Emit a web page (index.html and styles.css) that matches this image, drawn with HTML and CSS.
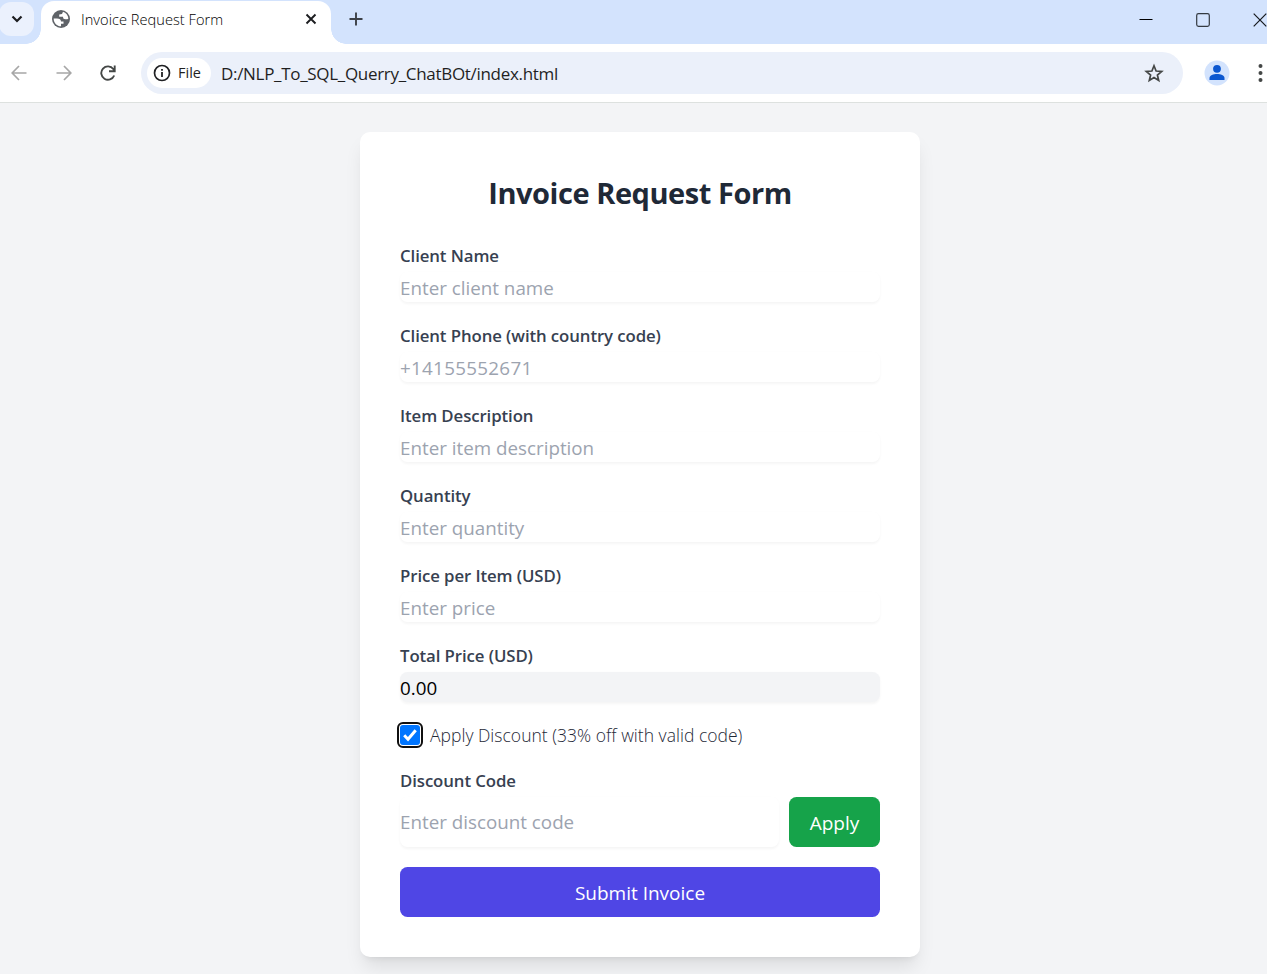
FILE: index.html
```html
<!DOCTYPE html>
<html lang="en">
<head>
<meta charset="utf-8">
<title>Invoice Request Form</title>
<link rel="stylesheet" href="styles.css">
</head>
<body>
<div class="tabstrip">
  <div class="tab-search"><svg width="12" height="8" viewBox="0 0 12 8"><path d="M1.500 1.500 6 6l4.500-4.500" fill="none" stroke="#1c1d20" stroke-width="2.200"/></svg></div>
  <div class="tab">
    <svg width="20" height="20" viewBox="0 0 20 20"><circle cx="10" cy="10" r="9" fill="#5f6368"/><path d="M2.700 9.500H6c2.600 0 4 .9 4 3h2.500v2.300H10V17.300C6 17.300 2.700 14 2.700 10zM12 2.800c3 .9 5.100 3.600 5.400 6.700-.9.900-1.800.800-3 .8-1.700 0-2.400-.8-2.400-2.500H8.200V5.500L11 5z" fill="#fff"/></svg>
    <span class="tab-title">Invoice Request Form</span>
    <svg class="tab-close" width="12" height="12" viewBox="0 0 12 12"><path d="M1.500 1.500l9 9M10.500 1.500l-9 9" stroke="#1c1d20" stroke-width="1.900"/></svg>
  </div>
  <div class="strip-rest">
    <svg width="14" height="14" viewBox="0 0 14 14"><path d="M7 .5v13M.5 7h13" stroke="#3c4047" stroke-width="1.900"/></svg>
    <div class="window-controls">
      <svg width="14" height="14" viewBox="0 0 14 14"><path d="M.5 6.500h13" stroke="#000"/></svg>
      <svg width="14" height="14" viewBox="0 0 14 14"><rect x=".7" y=".7" width="12.600" height="12.600" rx="1.800" fill="none" stroke="#333941" stroke-width="1.200"/></svg>
      <svg width="14" height="14" viewBox="0 0 14 14"><path d="M.7.700l12.600 12.600M13.300.700.700 13.300" stroke="#15181c" stroke-width="1.200"/></svg>
    </div>
  </div>
</div>
<div class="toolbar">
  <div class="nav">
    <svg width="16" height="16" viewBox="0 0 16 16"><path d="M15.500 8H1.500M8 1 1.200 8 8 15" fill="none" stroke="#a7a7a7" stroke-width="1.700"/></svg>
    <svg width="16" height="16" viewBox="0 0 16 16"><path d="M.5 8h14M8 1l6.800 7L8 15" fill="none" stroke="#a7a7a7" stroke-width="1.700"/></svg>
    <svg width="16" height="16" viewBox="0 0 16 16"><path d="M14.200 10.500A6.700 6.700 0 1 1 13.300 4L14.500 6M14.700.500V6.300H9" fill="none" stroke="#444746" stroke-width="1.900"/></svg>
  </div>
  <div class="address">
    <div class="chip"><svg width="18" height="18" viewBox="0 0 18 18"><circle cx="9" cy="9" r="7.500" fill="none" stroke="#202124" stroke-width="1.700"/><path d="M9 8v5M9 5v1.800" stroke="#202124" stroke-width="1.800"/></svg><span>File</span></div>
    <span class="url">D:/NLP_To_SQL_Querry_ChatBOt/index.html</span>
    <svg width="20" height="20" viewBox="0 0 20 20"><path d="M10 2.800l2.100 5.200 5.600.4-4.300 3.600 1.300 5.500-4.700-3-4.700 3 1.300-5.500-4.300-3.600 5.600-.4z" fill="none" stroke="#444746" stroke-width="1.700"/></svg>
  </div>
  <svg class="avatar" width="26" height="26" viewBox="0 0 26 26"><circle cx="13" cy="13" r="12.500" fill="#d3e3fd"/><circle cx="13" cy="8.800" r="3.900" fill="#0b57d0"/><path d="M5.500 20v-2.100c0-2.600 4-4 7.500-4s7.500 1.400 7.500 4V20z" fill="#0b57d0"/></svg>
  <svg class="menu" width="5" height="18" viewBox="0 0 5 18"><circle cx="2.500" cy="2" r="2" fill="#444746"/><circle cx="2.500" cy="9" r="2" fill="#444746"/><circle cx="2.500" cy="16" r="2" fill="#444746"/></svg>
</div>
<main class="page">
  <form class="card">
    <h1 class="heading">Invoice Request Form</h1>
    <div class="group"><label class="label">Client Name</label><div class="field">Enter client name</div></div>
    <div class="group"><label class="label">Client Phone (with country code)</label><div class="field phone">+14155552671</div></div>
    <div class="group"><label class="label">Item Description</label><div class="field">Enter item description</div></div>
    <div class="group"><label class="label">Quantity</label><div class="field">Enter quantity</div></div>
    <div class="group"><label class="label">Price per Item (USD)</label><div class="field">Enter price</div></div>
    <div class="group"><label class="label">Total Price (USD)</label><div class="field total">0.00</div></div>
    <label class="check-row">
      <span class="check"><svg width="20" height="20" viewBox="0 0 20 20"><path d="M4.200 10.300l3.800 3.900 7.700-9" fill="none" stroke="#fff" stroke-width="3"/></svg></span>
      <span>Apply Discount (33% off with valid code)</span>
    </label>
    <div class="group"><label class="label">Discount Code</label>
      <div class="code-row"><div class="field code">Enter discount code</div><button type="button" class="button apply">Apply</button></div>
    </div>
    <button type="button" class="button submit">Submit Invoice</button>
  </form>
</main>
</body>
</html>
```
FILE: styles.css
```css
* { box-sizing: border-box; }
body { margin: 0; height: 974px; overflow: hidden; display: flex; flex-direction: column; background: #f3f4f6; font-family: "Open Sans", "Noto Sans", sans-serif; font-size: 18.8px; color: #000; }
svg { display: block; flex: none; }
span { white-space: nowrap; }

.tabstrip { height: 44px; flex: none; display: flex; background: #d3e3fd; }
.tab-search { width: 41px; height: 44px; flex: none; display: flex; justify-content: center; padding: 15px 7px 0 0; background: radial-gradient(circle at 0 0, #d3e3fd 14.5px, #fff 15px) 26px 29px / 15px 15px no-repeat; position: relative; }
.tab-search::before { content: ""; position: absolute; left: -1px; top: 2px; width: 35px; height: 34px; border-radius: 12px; background: #ebf1fd; }
.tab-search svg { position: relative; }
.tab { width: 290px; height: 43px; margin-top: 1px; flex: none; display: flex; align-items: flex-start; padding: 8px 14px 0 10px; background: #fff; border-radius: 13px 13px 0 0; }
.tab-close { margin-top: 4px; }
.tab-title { flex: 1; padding-left: 10px; font-size: 14.6px; line-height: 21px; font-weight: 300; color: #000; letter-spacing: .03px; }
.strip-rest { flex: 1; display: flex; justify-content: space-between; padding: 12px 0 0 18px; background: radial-gradient(circle at 100% 0, #d3e3fd 14.5px, #fff 15px) 0 29px / 15px 15px no-repeat; }
.window-controls { display: flex; gap: 43px; padding: 1px 0.5px 0 0; }

.toolbar { height: 59px; flex: none; display: flex; align-items: flex-start; background: #fff; border-bottom: 1px solid #dde1df; padding: 8px 0 0 11px; }
.nav { display: flex; gap: 28.5px; width: 130px; padding-top: 13px; }
.address { width: 1042px; height: 42px; flex: none; display: flex; align-items: center; border-radius: 21px; background: #ebf0fa; padding: 0 19.5px 0 6px; }
.chip { width: 64px; height: 30px; display: flex; align-items: center; gap: 7px; padding-left: 6px; border-radius: 15px; background: #fff; font-size: 14.5px; line-height: 28px; font-weight: 500; color: #1f1f1f; }
.url { flex: 1; padding-left: 10px; font-size: 17px; letter-spacing: -.31px; color: #1f1f1f; }
.avatar { margin: 8px 0 0 20.5px; }
.menu { margin: 12px 0 0 28.5px; }

.page { flex: 1; display: flex; align-items: flex-start; justify-content: center; padding: 29px 0 0 13px; }
.card { width: 560px; height: 825px; display: flex; flex-direction: column; gap: 20px; padding: 40px; border-radius: 10px; background: #fff; box-shadow: 0 12.5px 19px -4px rgba(0,0,0,.1), 0 5px 7.5px -5px rgba(0,0,0,.1); }
.heading { margin: 0 0 5px; height: 45px; line-height: 42px; text-align: center; font-size: 29px; font-weight: 700; letter-spacing: -.45px; color: #1f2937; }
.group { display: flex; flex-direction: column; gap: 5px; }
.label { height: 25px; line-height: 28px; font-size: 16.8px; font-weight: 560; letter-spacing: -.09px; color: #374151; }
.field { height: 30px; line-height: 32px; border-radius: 7.5px; color: #9ca3af; box-shadow: 0 1.25px 2.5px rgba(0,0,0,.04); }
.phone { letter-spacing: .3px; }
.total { background: #f3f4f6; color: #000; }
.check-row { height: 25px; display: flex; align-items: center; gap: 10px; font-size: 17.5px; font-weight: 300; letter-spacing: .02px; color: #1f2937; line-height: 28px; }
.check-row span:last-child { padding-top: 1px; }
.check { width: 20px; height: 20px; border-radius: 3px; background: #0075ff; outline: 2px solid #101010; outline-offset: 1px; }
.code-row { display: flex; gap: 10px; }
.code { flex: 1; height: 50px; line-height: 51px; }
.button { height: 50px; flex: none; padding: 1px 0 0; border: 0; border-radius: 7.5px; color: #fff; font: inherit; }
.apply { width: 91px; font-size: 19px; background: #16a34a; }
.submit { width: 100%; font-size: 19px; background: #4f46e5; }
```
